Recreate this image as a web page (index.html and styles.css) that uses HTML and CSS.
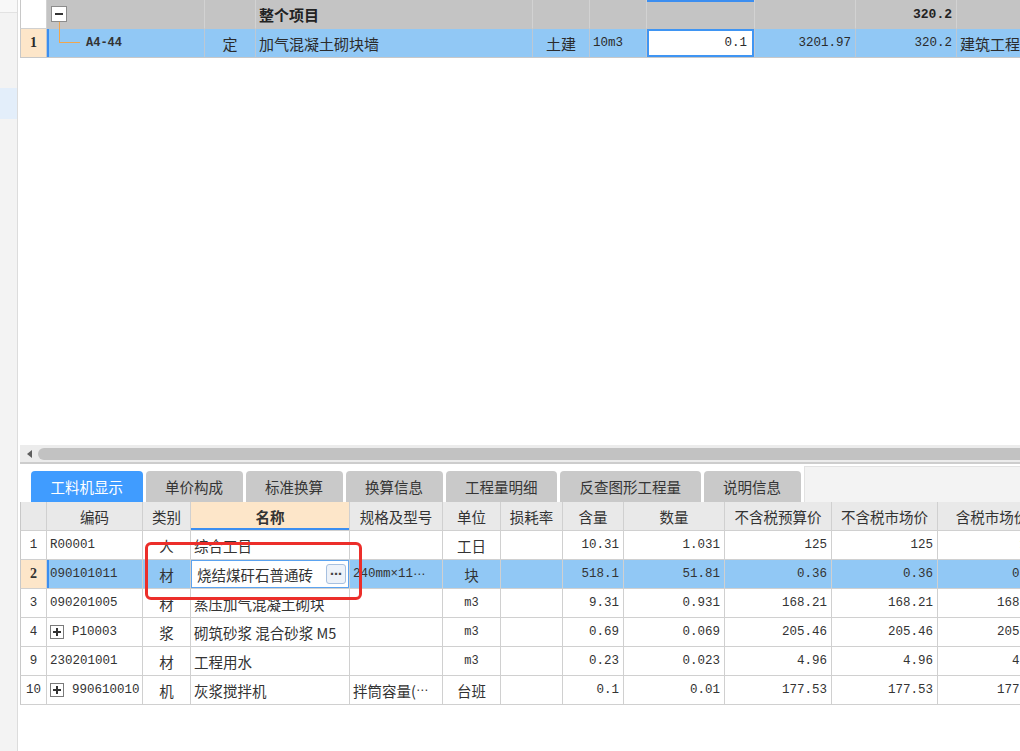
FILE: index.html
```html
<!DOCTYPE html>
<html lang="zh-CN">
<head>
<meta charset="utf-8">
<title>工料机显示</title>
<link rel="stylesheet" href="styles.css">
</head>
<body>
<div class="app">
  <aside class="side">
    <div class="side-top"></div>
    <div class="side-gap"></div>
    <div class="side-sel"></div>
  </aside>
  <main class="main">
    <section class="grid top-grid">
      <div class="row top-head">
        <div class="c rn blank"></div>
        <div class="c code"><span class="tbox minus"></span></div>
        <div class="c"></div>
        <div class="c name bold">整个项目</div>
        <div class="c"></div>
        <div class="c"></div>
        <div class="c selcol"></div>
        <div class="c"></div>
        <div class="c num bold">320.2</div>
        <div class="c"></div>
      </div>
      <div class="row top-item sel">
        <div class="c rn cur">1</div>
        <div class="c code focus-left"><span class="elbow"></span><span class="mono code-txt">A4-44</span></div>
        <div class="c center">定</div>
        <div class="c name">加气混凝土砌块墙</div>
        <div class="c center">土建</div>
        <div class="c mono">10m3</div>
        <div class="c num editor">0.1</div>
        <div class="c num">3201.97</div>
        <div class="c num">320.2</div>
        <div class="c name">建筑工程</div>
      </div>
    </section>

    <div class="blank-area"></div>

    <div class="hscroll"><span class="arrow"></span><span class="thumb"></span></div>

    <nav class="tabs">
      <span class="tab active">工料机显示</span>
      <span class="tab">单价构成</span>
      <span class="tab">标准换算</span>
      <span class="tab">换算信息</span>
      <span class="tab">工程量明细</span>
      <span class="tab">反查图形工程量</span>
      <span class="tab">说明信息</span>
      <span class="tab-fill"></span>
    </nav>

    <section class="grid low-grid">
      <div class="row head">
        <div class="c rn"></div>
        <div class="c center">编码</div>
        <div class="c center">类别</div>
        <div class="c center sorted">名称</div>
        <div class="c center">规格及型号</div>
        <div class="c center">单位</div>
        <div class="c center">损耗率</div>
        <div class="c center">含量</div>
        <div class="c center">数量</div>
        <div class="c center">不含税预算价</div>
        <div class="c center">不含税市场价</div>
        <div class="c center">含税市场价</div>
      </div>
      <div class="row">
        <div class="c rn">1</div>
        <div class="c mono">R00001</div>
        <div class="c center">人</div>
        <div class="c name">综合工日</div>
        <div class="c"></div>
        <div class="c center">工日</div>
        <div class="c"></div>
        <div class="c num">10.31</div>
        <div class="c num">1.031</div>
        <div class="c num">125</div>
        <div class="c num">125</div>
        <div class="c num">125</div>
      </div>
      <div class="row sel">
        <div class="c rn cur">2</div>
        <div class="c mono focus-left">090101011</div>
        <div class="c center">材</div>
        <div class="c name name-edit"><span class="edit-txt">烧结煤矸石普通砖</span><span class="more">⋯</span></div>
        <div class="c mono spec">240mm×11<span class="ell">⋯</span></div>
        <div class="c center">块</div>
        <div class="c"></div>
        <div class="c num">518.1</div>
        <div class="c num">51.81</div>
        <div class="c num">0.36</div>
        <div class="c num">0.36</div>
        <div class="c num">0.36</div>
      </div>
      <div class="row">
        <div class="c rn">3</div>
        <div class="c mono">090201005</div>
        <div class="c center">材</div>
        <div class="c name">蒸压加气混凝土砌块</div>
        <div class="c"></div>
        <div class="c center mono small">m3</div>
        <div class="c"></div>
        <div class="c num">9.31</div>
        <div class="c num">0.931</div>
        <div class="c num">168.21</div>
        <div class="c num">168.21</div>
        <div class="c num">168.21</div>
      </div>
      <div class="row">
        <div class="c rn">4</div>
        <div class="c mono"><span class="tbox plus"></span>P10003</div>
        <div class="c center">浆</div>
        <div class="c name">砌筑砂浆 混合砂浆 M5</div>
        <div class="c"></div>
        <div class="c center mono small">m3</div>
        <div class="c"></div>
        <div class="c num">0.69</div>
        <div class="c num">0.069</div>
        <div class="c num">205.46</div>
        <div class="c num">205.46</div>
        <div class="c num">205.46</div>
      </div>
      <div class="row">
        <div class="c rn">9</div>
        <div class="c mono">230201001</div>
        <div class="c center">材</div>
        <div class="c name">工程用水</div>
        <div class="c"></div>
        <div class="c center mono small">m3</div>
        <div class="c"></div>
        <div class="c num">0.23</div>
        <div class="c num">0.023</div>
        <div class="c num">4.96</div>
        <div class="c num">4.96</div>
        <div class="c num">4.96</div>
      </div>
      <div class="row">
        <div class="c rn">10</div>
        <div class="c mono"><span class="tbox plus"></span>990610010</div>
        <div class="c center">机</div>
        <div class="c name">灰浆搅拌机</div>
        <div class="c name">拌筒容量(<span class="ell">⋯</span></div>
        <div class="c center">台班</div>
        <div class="c"></div>
        <div class="c num">0.1</div>
        <div class="c num">0.01</div>
        <div class="c num">177.53</div>
        <div class="c num">177.53</div>
        <div class="c num">177.53</div>
      </div>
    </section>
  </main>
</div>
<div class="annot"></div>
</body>
</html>
```

FILE: styles.css
```css
* { box-sizing: border-box; }

html, body {
  margin: 0;
  padding: 0;
  width: 1020px;
  height: 751px;
  overflow: hidden;
  background: #ffffff;
  font-family: "Noto Sans CJK SC", "Noto Sans", sans-serif;
  font-size: 14.5px;
  color: #2b2b2b;
}

.app {
  display: flex;
  width: 1020px;
  height: 751px;
}

/* left strip */
.side {
  width: 18px;
  flex: none;
  background: #f3f3f3;
  border-right: 1px solid #dcdcdc;
  display: flex;
  flex-direction: column;
}
.side-top {
  height: 13px;
  background: #f8f8f8;
  border-bottom: 1px solid #e2e2e2;
}
.side-gap { height: 75px; }
.side-sel {
  height: 31px;
  background: #e3eefa;
}

.main {
  margin-left: 2px;
  width: 1000px;
  flex: none;
  overflow: hidden;
  display: flex;
  flex-direction: column;
}

/* generic grid */
.grid { width: max-content; }
.row { display: grid; }
.c {
  display: flex;
  align-items: center;
  padding: 0 3px;
  white-space: nowrap;
  overflow: hidden;
  border-right: 1px solid #d0d0d0;
  border-bottom: 1px solid #d0d0d0;
}
.c:first-child { border-left: 1px solid #c8c8c8; }
.center { justify-content: center; }
.num {
  justify-content: flex-end;
  font-family: "Liberation Mono", "DejaVu Sans Mono", monospace;
  font-size: 12.5px;
  padding-right: 4px;
}
.mono {
  font-family: "Liberation Mono", "DejaVu Sans Mono", monospace;
  font-size: 12.5px;
}
.small { font-size: 12px; }
.bold { font-weight: bold; }
.rn {
  justify-content: center;
  font-family: "Liberation Mono", "DejaVu Sans Mono", monospace;
  font-size: 12.5px;
  padding: 0;
}
.rn.cur {
  background: #fde6c9;
  font-weight: bold;
  font-family: "Liberation Serif", serif;
  font-size: 14px;
}
.focus-left { box-shadow: inset 2px 0 0 #3c8ef0; }

/* top grid */
.top-grid .row {
  grid-template-columns: 27px 158px 51px 277px 57px 57px 108px 101px 101px 120px;
}
.top-head { height: 29px; background: #c4c4c4; }
.top-head .c { border-color: #d2d2d2; border-bottom-color: #c4c4c4; }
.top-head .c:first-child { border-left-color: #c8c8c8; }
.top-head .rn.blank { background: #ffffff; border-bottom-color: #d0d0d0; }
.top-head .bold { font-size: 15px; color: #222; }
.top-head .num.bold { font-size: 13px; }
.top-head .selcol { box-shadow: inset 0 2px 0 #3c8ef0; }
.top-head .code { padding-left: 4px; overflow: visible; position: relative; z-index: 2; }

.top-item { height: 29px; }
.sel { background: #91c8f5; }
.top-item .c { border-right-color: #bcc8d4; border-bottom-color: #c8c8c8; }
.top-item .code { align-items: flex-start; padding-left: 12px; }
.top-item .code-txt { align-self: center; margin-left: 6px; color: #333; font-weight: bold; font-size: 12px; }
.elbow {
  display: block;
  flex: none;
  width: 21px;
  height: 14px;
  border-left: 1px solid #f0a64e;
  border-bottom: 1px solid #f0a64e;
}
.top-item .name { font-size: 15px; }
.top-item .center { font-size: 15px; }
.editor {
  background: #ffffff;
  box-shadow: inset 0 0 0 2px #3f95f3;
  padding-right: 7px;
}

/* tree boxes */
.tbox {
  display: inline-block;
  position: relative;
  flex: none;
  background: #ffffff;
  border: 1px solid #8c8c8c;
}
.tbox.minus { width: 16px; height: 16px; }
.tbox.minus::before {
  content: "";
  position: absolute;
  left: 3px;
  right: 3px;
  top: 6px;
  height: 2px;
  background: #333;
}
.tbox.minus::after {
  content: "";
  position: absolute;
  left: 7px;
  top: 15px;
  width: 1px;
  height: 9px;
  background: #f0a64e;
}
.tbox.plus { width: 14px; height: 14px; margin-right: 8px; border-color: #7a7a7a; }
.tbox.plus::before {
  content: "";
  position: absolute;
  left: 2px; right: 2px; top: 5px;
  height: 1.5px;
  background: #333;
}
.tbox.plus::after {
  content: "";
  position: absolute;
  top: 2px; bottom: 2px; left: 5px;
  width: 1.5px;
  background: #333;
}

/* blank area + scrollbar */
.blank-area { height: 387px; flex: none; }
.hscroll {
  height: 19px;
  flex: none;
  background: #ececec;
  border-bottom: 2px solid #cdcdcd;
  display: flex;
  align-items: center;
  padding-left: 7px;
}
.arrow {
  width: 0;
  height: 0;
  border-top: 4px solid transparent;
  border-bottom: 4px solid transparent;
  border-right: 5px solid #5f5f5f;
  margin-right: 6px;
}
.thumb {
  flex: 1;
  height: 12px;
  background: #c2c2c2;
  border-radius: 6px 0 0 6px;
}

/* tabs */
.tabs {
  height: 38px;
  flex: none;
  display: flex;
  align-items: flex-end;
  gap: 3px;
  padding-left: 11px;
}
.tab {
  height: 31px;
  padding: 0 19.5px;
  display: flex;
  align-items: center;
  background: #c9c9c9;
  color: #353535;
  border-radius: 4px 4px 0 0;
  white-space: nowrap;
}
.tab.active { background: #409cff; color: #ffffff; }
.tab-fill {
  flex: 1;
  height: 36px;
  background: #f3f3f3;
  border-top: 1px solid #e2e2e2;
  border-left: 1px solid #e2e2e2;
}

/* lower grid */
.low-grid .row {
  grid-template-columns: 27px 96px 48px 159px 93px 58px 62px 61px 101px 107px 106px 109px;
  height: 29px;
}
.low-grid .c { color: #333; }
.head { background: #e9e9e9; }
.head .c { color: #333; }
.head .sorted {
  background: #fde6c9;
  font-weight: bold;
  box-shadow: inset 0 -2px 0 #3c8ef0;
}
.name-edit {
  background: #ffffff;
  box-shadow: inset 0 0 0 1px #5ba3f0;
  padding-left: 6px;
  padding-right: 3px;
}
.edit-txt { flex: 1; }
.more {
  width: 20px;
  height: 20px;
  flex: none;
  display: flex;
  align-items: center;
  justify-content: center;
  border: 1px solid #a7c0e0;
  border-radius: 3px;
  background: #edf2f9;
  font-family: "DejaVu Sans", sans-serif;
  font-size: 12px;
  font-weight: bold;
  color: #444;
  line-height: 1;
}
.ell { font-family: "DejaVu Sans", sans-serif; font-size: 12px; }

/* red annotation */
.annot {
  position: absolute;
  left: 145px;
  top: 542px;
  width: 217px;
  height: 58px;
  border: 3px solid #ec2e2a;
  border-radius: 6px;
  z-index: 10;
}
```
